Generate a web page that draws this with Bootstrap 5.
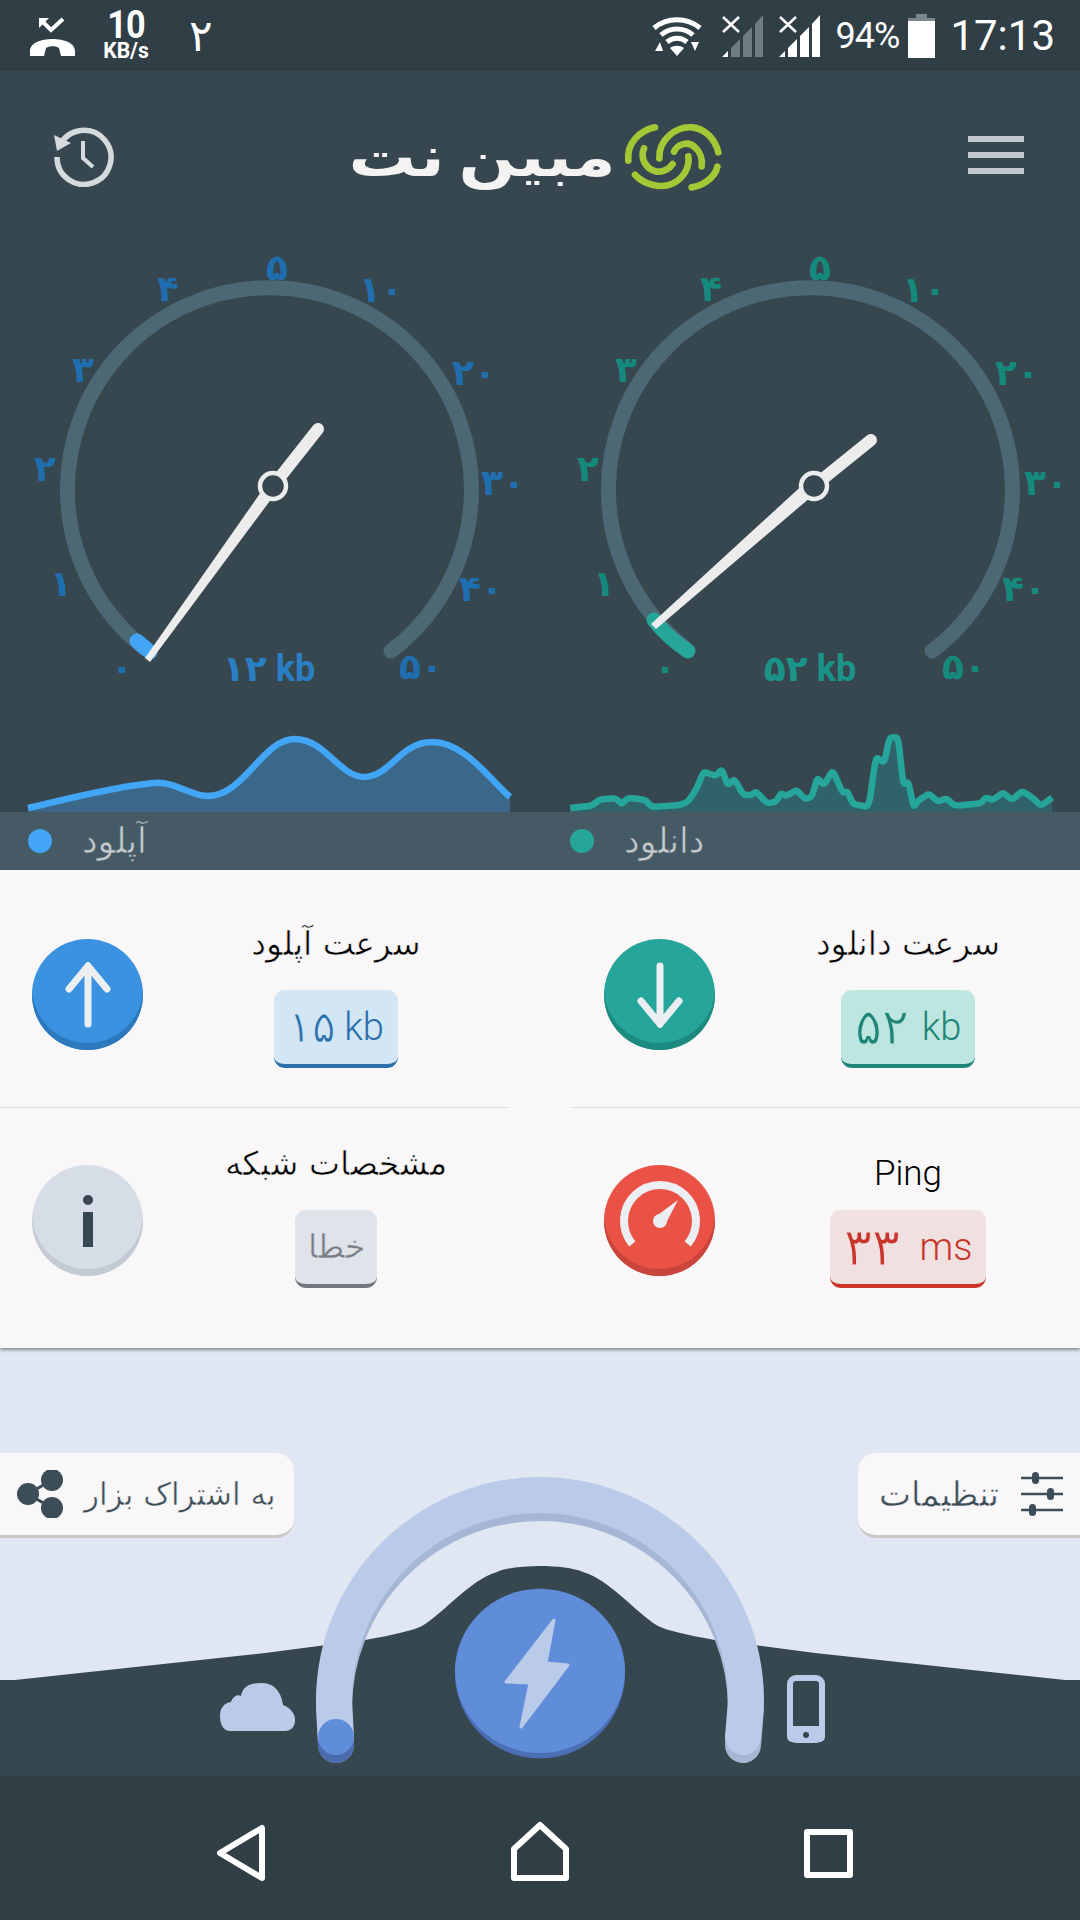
<!DOCTYPE html>
<html lang="fa">
<head>
    <meta charset="UTF-8">
    <meta name="viewport" content="width=device-width, initial-scale=1.0">
    <title>Speed test</title>
    <link href="https://cdn.jsdelivr.net/npm/bootstrap@5.3.0/dist/css/bootstrap.min.css" rel="stylesheet">
    <style>
        body {
            width: 1080px;
            height: 1920px;
            overflow: hidden;
            background: #303e46;
            font-family: Roboto, "DejaVu Sans", sans-serif;
        }
        .status-bar {
            height: 71px;
            background: #303e46;
            color: #fff;
            padding: 0 25px 0 29px;
        }
        .net-speed {
            width: 50px;
            margin-left: 24px;
            font-weight: 700;
        }
        .net-num { font-size: 39px; line-height: 31px; letter-spacing: -1px; transform: scaleX(.88); }
        .net-unit { font-size: 22px; line-height: 20px; white-space: nowrap; transform: scaleX(.96); }
        .sim-num { font-size: 44px; line-height: 1; margin-left: 38px; font-family: "DejaVu Sans", sans-serif; }
        .batt-text { font-size: 36px; margin: 0 9px 0 15px; letter-spacing: -1px; }
        .clock-text { font-size: 42px; margin-left: 15px; line-height: 1; }
        .app-head {
            height: 129px;
            background: #37474f;
            padding: 42px 56px 0 54px;
        }
        .logo-text {
            font-family: "DejaVu Sans", sans-serif;
            font-weight: 700;
            font-size: 56px;
            color: #f4f3f2;
            line-height: 1;
            width: 252px;
            text-align: center;
            white-space: nowrap;
            word-spacing: -8px;
            transform: scaleX(1.2);
            margin-right: 12px;
            display: inline-block;
        }
        .burger-box { padding-bottom: 4px; }
        .burger-bar { display: block; width: 56px; height: 6px; background: #c3cacd; margin: 10px 0; }
        .gauge-wrap { background: #37474f; }
        .gauge-wrap svg { display: block; }
        .tick-label { font-family: "DejaVu Sans", sans-serif; font-weight: 700; font-size: 36px; text-anchor: middle; letter-spacing: -4px; }
        .val-label { font-family: Roboto, "DejaVu Sans", sans-serif; font-weight: 700; font-size: 36px; text-anchor: middle; }
        .legend-bar {
            height: 58px;
            background: #455a64;
            color: #c5cbcf;
            font-family: "DejaVu Sans", sans-serif;
            font-size: 35px;
            -webkit-text-stroke: .6px #455a64;
        }
        .legend-item { width: 540px; padding-left: 28px; }
        .legend-item.is-down { padding-left: 30px; }
        .legend-dot { width: 24px; height: 24px; border-radius: 50%; margin-right: 30px; }
        .stat-panel {
            height: 478px;
            background: #f9f7f8;
            box-shadow: 0 2px 3px rgba(60, 70, 80, .55);
            position: relative;
            z-index: 1;
        }
        .stat-line { height: 1px; background: #dddcdc; }
        .stat-row-a { height: 237px; padding-top: 55px; }
        .stat-row-b { height: 241px; padding-top: 41px; }
        .stat-cell { width: 540px; }
        .stat-cell.is-left { padding-left: 32px; }
        .stat-cell.is-right { padding-left: 64px; }
        .round-icon {
            width: 111px;
            height: 111px;
            flex: none;
            border-radius: 50%;
        }
        .stat-row-a .round-icon { margin-top: 14px; }
        .stat-row-b .round-icon { margin-top: 16px; }
        .round-blue { background: #3a92e0; box-shadow: inset 0 -7px 0 #2d79bd; }
        .round-teal { background: #26a69a; box-shadow: inset 0 -7px 0 #1c8a7f; }
        .round-gray { background: #d7dde7; box-shadow: inset 0 -7px 0 #c3cad4; }
        .round-red { background: #ea5246; box-shadow: inset 0 -7px 0 #c9453b; }
        .stat-text { width: 280px; margin-left: 53px; }
        .stat-title {
            font-family: "DejaVu Sans", sans-serif;
            font-size: 33px;
            line-height: 38px;
            color: #000;
            white-space: nowrap;
            -webkit-text-stroke: .6px #f9f7f8;
        }
        .stat-row-a .stat-title { height: 65px; }
        .stat-row-b .stat-title { height: 61px; line-height: 30px; }
        .stat-row-b .ping-title { font-family: Roboto, sans-serif; font-weight: 300; padding-top: 10px; font-size: 35px; -webkit-text-stroke: 0; }
        .val-chip {
            height: 78px;
            border-radius: 11px;
            font-size: 38px;
            font-weight: 300;
            white-space: nowrap;
            border-bottom: 4px solid;
            font-family: Roboto, "DejaVu Sans", sans-serif;
        }
        .chip-num { font-family: "DejaVu Sans", sans-serif; font-size: 44px; }
        .chip-blue { width: 124px; background: #d3e6f5; color: #2c6fa9; border-color: #2c6fa9; }
        .chip-blue .chip-num { -webkit-text-stroke: 1px #d3e6f5; }
        .chip-teal { width: 134px; background: #bde6e0; color: #1f8577; border-color: #1f8577; gap: 13px; }
        .chip-teal .chip-num { -webkit-text-stroke: 1px #bde6e0; font-size: 50px; }
        .chip-gray { width: 82px; background: #dfe3ea; color: #787c82; border-color: #737780; font-size: 33px; font-family: "DejaVu Sans", sans-serif; -webkit-text-stroke: .5px #dfe3ea; }
        .chip-red { width: 156px; background: #f0e1e0; color: #c9352b; border-color: #c9352b; gap: 20px; }
        .chip-red .chip-num { -webkit-text-stroke: 1px #f0e1e0; font-size: 52px; }
        .control-area {
            height: 428px;
            background: #e0e6f2;
            position: relative;
            padding-top: 105px;
        }
        .control-art { position: absolute; left: 0; top: 0; }
        .side-btn {
            position: relative;
            height: 85px;
            background: #f9f7f8;
            color: #3c4d57;
            font-family: "DejaVu Sans", sans-serif;
            font-size: 31px;
            border-bottom: 3px solid #c9c7c5;
            white-space: nowrap;
            -webkit-text-stroke: .5px #f9f7f8;
        }
        .side-share { width: 294px; border-radius: 0 18px 18px 0; padding-left: 16px; gap: 20px; }
        .side-set { width: 222px; border-radius: 18px 0 0 18px; padding-left: 21px; gap: 22px; font-size: 34px; }
        .nav-keys { height: 144px; background: #303e46; }
        .nav-keys svg { display: block; }
    </style>
</head>
<body>
    <div class="status-bar d-flex align-items-center">
        <svg width="48" height="42" viewBox="0 0 48 42">
            <path d="M1 41 V36 C1 28 12 24 23.500 24 C35 24 46 28 46 36 V41 H32 L30 33 C27 30.500 20 30.500 17 33 L15 41 Z" fill="#fff"/>
            <path d="M13 6 L22 15 L34 4" fill="none" stroke="#fff" stroke-width="4"/>
            <path d="M10 3 H20 L10 13 Z" fill="#fff"/>
        </svg>
        <div class="net-speed text-center">
            <div class="net-num">10</div>
            <div class="net-unit">KB/s</div>
        </div>
        <div class="sim-num">۲</div>
        <div class="ms-auto d-flex align-items-center">
            <svg width="50" height="42" viewBox="0 0 50 42">
                <path d="M2 13 C15 2 35 2 48 13" fill="none" stroke="#fff" stroke-width="5"/>
                <path d="M9 20 C18 12 32 12 41 20" fill="none" stroke="#fff" stroke-width="5"/>
                <path d="M15 27 C21 22 29 22 35 27" fill="none" stroke="#fff" stroke-width="5"/>
                <path d="M25 41 L18 33 C22 30 28 30 32 33 Z M3 36 L8 27 L11 36 Z M47 27 L39 27 L43 36 Z" fill="#fff"/>
            </svg>
            <svg style="margin-left:20px" width="42" height="42" viewBox="0 0 42 42">
                <path d="M9 42 V33 L18 24 V42 Z M21 42 V21 L30 12 V42 Z M33 42 V9 L41 0 V42 Z" fill="#6f7c83"/>
                <path d="M0 42 L6 36 V42 Z" fill="#fff"/>
                <path d="M1 2 L17 17 M17 2 L1 17" stroke="#fff" stroke-width="2.500"/>
            </svg>
            <svg style="margin-left:15px" width="42" height="42" viewBox="0 0 42 42">
                <path d="M0 42 L6 36 V42 Z M9 42 V33 L18 24 V42 Z M21 42 V21 L30 12 V42 Z M33 42 V9 L41 0 V42 Z" fill="#fff"/>
                <path d="M1 2 L17 17 M17 2 L1 17" stroke="#fff" stroke-width="2.500"/>
            </svg>
            <span class="batt-text">94%</span>
            <svg width="27" height="44" viewBox="0 0 27 44">
                <path d="M8 0 H19 V4 H27 V44 H0 V4 H8 Z" fill="#fff"/>
                <path d="M8 0 H19 V4 H27 V7 H0 V4 H8 Z" fill="#7b878d"/>
            </svg>
            <span class="clock-text">17:13</span>
        </div>
    </div>

    <div class="app-head d-flex align-items-center justify-content-between">
        <svg width="60" height="60" viewBox="0 0 60 60">
            <path d="M6 18 A27 27 0 1 1 3 30" fill="none" stroke="#d5dadc" stroke-width="5.500"/>
            <path d="M0 8 L3 24 L17 16 Z" fill="#d5dadc"/>
            <path d="M29 14 V31 L39 40" fill="none" stroke="#d5dadc" stroke-width="4"/>
        </svg>
        <div class="d-flex align-items-center">
            <span class="logo-text" dir="rtl">مبین نت</span>
            <svg width="106" height="76" viewBox="0 0 318 228">
                <g fill="none" stroke="#a1c935" stroke-width="20" stroke-linecap="round">
                    <path d="M105 25 C60 35 20 70 25 125"/>
                    <path d="M118 118 C115 60 170 22 215 25 C255 28 285 60 295 100"/>
                    <path d="M72 88 C60 115 75 150 110 158 C130 160 150 148 158 135"/>
                    <path d="M162 98 C172 75 205 65 225 85 C240 98 248 120 245 142"/>
                    <path d="M45 167 C70 195 120 210 155 195 C190 180 210 145 205 112"/>
                    <path d="M215 205 C250 200 285 175 292 143"/>
                </g>
            </svg>
        </div>
        <div class="burger-box">
            <span class="burger-bar"></span>
            <span class="burger-bar"></span>
            <span class="burger-bar"></span>
        </div>
    </div>

    <div class="gauge-wrap d-flex">
        <svg id="gaugeUp" width="540" height="612" viewBox="0 200 540 612"></svg>
        <svg id="gaugeDown" width="540" height="612" viewBox="540 200 540 612"></svg>
    </div>

    <div class="legend-bar d-flex">
        <div class="legend-item d-flex align-items-center">
            <span class="legend-dot" style="background:#42a5f5"></span><span>آپلود</span>
        </div>
        <div class="legend-item is-down d-flex align-items-center">
            <span class="legend-dot" style="background:#26a69a"></span><span>دانلود</span>
        </div>
    </div>

    <div class="stat-panel">
        <div class="d-flex stat-row-a">
            <div class="stat-cell is-left d-flex align-items-start">
                <div class="round-icon round-blue d-flex align-items-center justify-content-center">
                    <svg width="60" height="66" viewBox="0 0 60 66"><path d="M30 62 V4 M11 27 L30 4 L49 27" fill="none" stroke="#eceff1" stroke-width="7" stroke-linecap="round"/></svg>
                </div>
                <div class="stat-text d-flex flex-column align-items-center">
                    <div class="stat-title" dir="rtl">سرعت آپلود</div>
                    <div class="val-chip chip-blue d-flex align-items-center justify-content-center gap-2"><span class="chip-num">۱۵</span><span>kb</span></div>
                </div>
            </div>
            <div class="stat-cell is-right d-flex align-items-start">
                <div class="round-icon round-teal d-flex align-items-center justify-content-center">
                    <svg width="60" height="66" viewBox="0 0 60 66"><path d="M30 4 V62 M11 39 L30 62 L49 39" fill="none" stroke="#eceff1" stroke-width="7" stroke-linecap="round"/></svg>
                </div>
                <div class="stat-text d-flex flex-column align-items-center">
                    <div class="stat-title" dir="rtl">سرعت دانلود</div>
                    <div class="val-chip chip-teal d-flex align-items-center justify-content-center"><span class="chip-num">۵۲</span><span>kb</span></div>
                </div>
            </div>
        </div>
        <div class="d-flex">
            <div class="stat-line" style="width:509px"></div>
            <div class="stat-line ms-auto" style="width:509px"></div>
        </div>
        <div class="d-flex stat-row-b">
            <div class="stat-cell is-left d-flex align-items-start">
                <div class="round-icon round-gray d-flex align-items-center justify-content-center">
                    <svg width="14" height="52" viewBox="0 0 14 52"><circle cx="7" cy="5" r="5" fill="#37474f"/><rect x="2" y="17" width="10" height="35" fill="#37474f"/></svg>
                </div>
                <div class="stat-text d-flex flex-column align-items-center">
                    <div class="stat-title" dir="rtl">مشخصات شبکه</div>
                    <div class="val-chip chip-gray d-flex align-items-center justify-content-center" dir="rtl">خطا</div>
                </div>
            </div>
            <div class="stat-cell is-right d-flex align-items-start">
                <div class="round-icon round-red d-flex align-items-center justify-content-center">
                    <svg width="84" height="80" viewBox="0 0 84 80">
                        <path d="M14.300 63 A36 36 0 1 1 69.700 63" fill="none" stroke="#eceff1" stroke-width="8"/>
                        <path d="M37 36 L60 19 L47 44 Z" fill="#eceff1"/>
                        <circle cx="42" cy="40" r="7" fill="#eceff1"/>
                    </svg>
                </div>
                <div class="stat-text d-flex flex-column align-items-center">
                    <div class="stat-title ping-title">Ping</div>
                    <div class="val-chip chip-red d-flex align-items-center justify-content-center"><span class="chip-num">۳۳</span><span>ms</span></div>
                </div>
            </div>
        </div>
    </div>

    <div class="control-area">
        <svg class="control-art" width="1080" height="428" viewBox="0 1348 1080 428">
            <path d="M0 1776 V1680 H15 L265 1653 L365 1640 Q410 1632 422 1626 C445 1612 470 1580 497 1572 C515 1564 565 1564 583 1572 C610 1580 635 1612 658 1626 Q670 1632 715 1640 L815 1653 L1065 1680 H1080 V1776 Z" fill="#37474f"/>
            <path d="M336 1737 L334 1701 A206 206 0 0 1 746 1701 L743 1737" transform="translate(0 8)" fill="none" stroke="#a5b7d4" stroke-width="36" stroke-linecap="round"/>
            <path d="M336 1737 L334 1701 A206 206 0 0 1 746 1701 L743 1737" fill="none" stroke="#b9cbe9" stroke-width="36" stroke-linecap="round"/>
            <circle cx="336" cy="1745" r="18" fill="#4a6cae"/>
            <circle cx="336" cy="1737" r="18" fill="#5f8dd9"/>
            <circle cx="540" cy="1673.500" r="85" fill="#4a6fb5"/>
            <ellipse cx="540" cy="1671" rx="85" ry="82" fill="#5f8dd9"/>
            <path d="M554 1620 L506 1682 L530 1683 L521 1727 L568 1665 L546 1663 Z" fill="#b9cbe9" stroke="#b9cbe9" stroke-width="3" stroke-linejoin="round"/>
            <path d="M230 1731 C222 1731 220 1722 220 1716 C220 1708 224 1703 231 1702 C233 1696 238 1694 241 1696 C243 1686 250 1683 262 1683 C276 1683 282 1695 283 1705 C291 1708 295 1714 295 1720 C295 1727 291 1731 285 1731 Z" fill="#b9cbe9"/>
            <rect x="790" y="1678" width="32" height="62" rx="6" fill="none" stroke="#b9cbe9" stroke-width="6"/>
            <path d="M787 1726 H825 V1736 Q825 1742 819 1742 H793 Q787 1742 787 1736 Z" fill="#b9cbe9"/>
            <circle cx="806" cy="1735" r="3" fill="#37474f"/>
        </svg>
        <div class="d-flex justify-content-between">
            <div class="side-btn side-share d-flex align-items-center">
                <svg width="48" height="48" viewBox="0 0 48 48">
                    <path d="M36 10 L12 24 L36 38" fill="none" stroke="#3c4d57" stroke-width="3"/>
                    <circle cx="36" cy="10" r="11" fill="#3c4d57"/>
                    <circle cx="12" cy="24" r="11" fill="#3c4d57"/>
                    <circle cx="36" cy="38" r="11" fill="#3c4d57"/>
                </svg>
                <span dir="rtl">به اشتراک بزار</span>
            </div>
            <div class="side-btn side-set d-flex align-items-center">
                <span dir="rtl">تنظیمات</span>
                <svg width="42" height="44" viewBox="0 0 42 44">
                    <path d="M0 6 H42 M0 22 H42 M0 38 H42" stroke="#3c4d57" stroke-width="2.500"/>
                    <rect x="11" y="0" width="7" height="12" rx="3.500" fill="#3c4d57"/>
                    <rect x="26" y="16" width="7" height="12" rx="3.500" fill="#3c4d57"/>
                    <rect x="8" y="32" width="7" height="12" rx="3.500" fill="#3c4d57"/>
                </svg>
            </div>
        </div>
    </div>

    <div class="nav-keys">
        <svg width="1080" height="144" viewBox="0 1776 1080 144">
            <g fill="none" stroke="#fff" stroke-width="6" stroke-linejoin="round">
                <path d="M262 1828 V1878 L220 1853 Z"/>
                <path d="M514 1878 V1849 L540 1825 L566 1849 V1878 Z"/>
                <rect x="807" y="1832" width="43" height="43"/>
            </g>
        </svg>
    </div>

    <script src="https://cdn.jsdelivr.net/npm/bootstrap@5.3.0/dist/js/bootstrap.bundle.min.js"></script>
    <script>
        const tickText = ["۰", "۱", "۲", "۳", "۴", "۵", "۱۰", "۲۰", "۳۰", "۴۰", "۵۰"];
        const tickPos = [[122,680],[61,596],[45,481],[83,382],[168,301],[277,280],[381,302],[474,385],[503,495],[481,601],[421,679]];

        const upLine = "M28 808 C60 801 110 787 154 783 C175 781 190 796 207 796 C245 796 262 739 295 739 C325 739 340 777 364 777 C390 777 400 742 432 742 C465 742 490 780 510 797";
        const downRaw = [[88,1387],[150,1382],[175,1366],[220,1364],[238,1378],[255,1363],[305,1367],[325,1385],[405,1380],[430,1372],[455,1340],[475,1300],[510,1310],[528,1295],[545,1332],[565,1318],[590,1355],[612,1356],[628,1348],[660,1376],[685,1372],[700,1352],[715,1358],[745,1344],[770,1366],[790,1360],[805,1315],[825,1332],[850,1296],[878,1350],[893,1348],[910,1378],[955,1385],[975,1265],[1000,1278],[1015,1218],[1040,1218],[1055,1330],[1070,1325],[1085,1385],[1100,1368],[1130,1353],[1155,1372],[1180,1364],[1205,1382],[1280,1376],[1295,1362],[1315,1368],[1345,1350],[1370,1368],[1400,1347],[1430,1362],[1455,1382],[1487,1362]];
        const downPts = downRaw.map(p => [540 + p[0] / 2.904, 230 + p[1] / 2.4]);
        // round each corner a little, keep the peaks
        const cut = (a, b, t) => `${a[0] + (b[0] - a[0]) * t} ${a[1] + (b[1] - a[1]) * t}`;
        let downLine = `M${downPts[0].join(" ")}`;
        for (let i = 1; i < downPts.length - 1; i++) {
            let p = downPts[i];
            downLine += ` L${cut(p, downPts[i - 1], 0.25)} Q${p[0]} ${p[1]} ${cut(p, downPts[i + 1], 0.25)}`;
        }
        downLine += ` L${downPts[downPts.length - 1].join(" ")}`;

        const drawGauge = (id, o) => {
            let labels = tickPos.map((p, i) =>
                `<text class="tick-label" x="${p[0] + o.dx}" y="${p[1]}" fill="${o.tick}">${tickText[i]}</text>`).join("");
            document.getElementById(id).innerHTML = `
                <path d="M${o.cx - 125} 648 A202 202 0 1 1 ${o.cx + 122} 651" fill="none" stroke="#4d6875" stroke-width="15" stroke-linecap="round"/>
                <path d="${o.prog}" fill="none" stroke="${o.main}" stroke-width="15" stroke-linecap="round"/>
                ${labels}
                <text class="val-label" x="${o.cx}" y="681" fill="${o.valc}">${o.val} kb</text>
                <path d="${o.line} V812 H${o.x0} Z" fill="${o.fill}"/>
                <path d="${o.line}" fill="none" stroke="${o.main}" stroke-width="6.500" stroke-linejoin="round"/>
                <line x1="${o.px}" y1="486" x2="${o.tip[0]}" y2="${o.tip[1]}" stroke="#ececec" stroke-width="12" stroke-linecap="round"/>
                <path d="${o.tail}" fill="#ececec"/>
                <circle cx="${o.px}" cy="486" r="13" fill="#37474f" stroke="#ececec" stroke-width="4.500"/>`;
        };

        drawGauge("gaugeUp", {
            dx: 0, cx: 269, px: 273, tip: [318, 429], main: "#42a5f5", tick: "#1f6fb0", valc: "#2a7fc4", fill: "#3b6789",
            val: "۱۲", prog: "M150 652 L137 641", line: upLine, x0: 28,
            tail: "M268 482 L278 490 L150 662 L145 658 Z"
        });
        drawGauge("gaugeDown", {
            dx: 543, cx: 810, px: 814, tip: [871, 440], main: "#26a69a", tick: "#14897c", valc: "#1a9488", fill: "#2f6369",
            val: "۵۲", prog: "M688 651 Q668 638 654 620", line: downLine, x0: 570,
            tail: "M808 480 L818 491 L656 629 L651 624 Z"
        });
    </script>
</body>
</html>
